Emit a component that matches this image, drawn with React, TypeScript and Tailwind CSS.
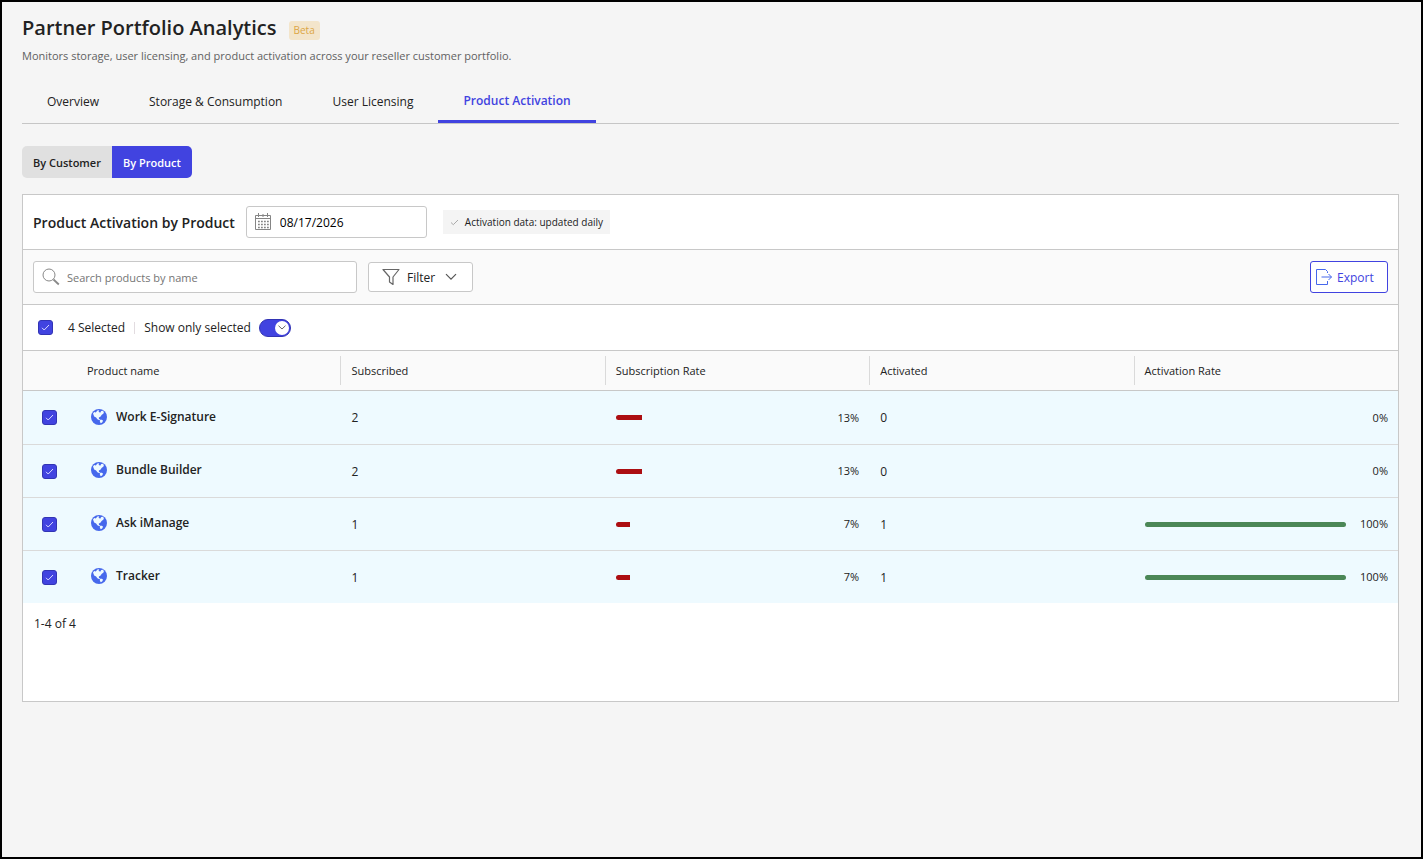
import { useState, type ReactNode } from 'react'
import { clsx } from 'clsx'

type Product = {
  name: string
  subscribed: number
  subscriptionRate: number
  activated: number
  activationRate: number
}

const TABS = ['Overview', 'Storage & Consumption', 'User Licensing', 'Product Activation']
const VIEWS = ['By Customer', 'By Product']
const COLUMNS = ['Product name', 'Subscribed', 'Subscription Rate', 'Activated', 'Activation Rate']

const PRODUCTS: Product[] = [
  { name: 'Work E-Signature', subscribed: 2, subscriptionRate: 13, activated: 0, activationRate: 0 },
  { name: 'Bundle Builder', subscribed: 2, subscriptionRate: 13, activated: 0, activationRate: 0 },
  { name: 'Ask iManage', subscribed: 1, subscriptionRate: 7, activated: 1, activationRate: 100 },
  { name: 'Tracker', subscribed: 1, subscriptionRate: 7, activated: 1, activationRate: 100 },
]

function GlobeIcon() {
  return (
    <svg width="16" height="16" viewBox="0 0 16 16" className="shrink-0" aria-hidden="true">
      <circle cx="8" cy="8" r="8" fill="#4668ec" />
      <path
        d="M2 4.6 3.2 3l1.6.4L6.4 1.4l1.8-.2-.6 1.6 1.6 1 1-1.8 1.6-.3 1.1 1.2-.4 1.7-1.9 1.3-1.2 1.8-1.6.8.2 1.4 1.3.7-.8.6-2.1-1-1.3-1.8L3.2 7.5Z"
        fill="#eefaff"
      />
      <path d="m9.2 10.7 1.7.1 1.2 1-1 1.7-1.4.8-.9-1.8Z" fill="#eefaff" />
    </svg>
  )
}

function CalendarIcon() {
  return (
    <svg width="18" height="18" viewBox="0 0 18 18" fill="none" stroke="#858585" aria-hidden="true">
      <path d="M1.5 2.5h15v14h-15zM1 5.5h16M4.5 0v4M13.5 0v4M9 1v3" />
      <path d="M4 8.5h11M4 11.5h11M4 14.5h11" strokeWidth="1.6" strokeDasharray="1.8 1.2" />
    </svg>
  )
}

function SearchIcon() {
  return (
    <svg width="18" height="18" viewBox="0 0 18 18" fill="none" stroke="#888" aria-hidden="true">
      <circle cx="7" cy="7" r="6" />
      <path d="m11.5 11.5 5.3 5" strokeWidth="1.8" />
    </svg>
  )
}

function FilterIcon() {
  return (
    <svg width="18" height="18" viewBox="0 0 18 18" fill="none" stroke="#666" strokeWidth="1.2" aria-hidden="true">
      <path d="M1 1.5h16L11 9v7.5L7.5 14V9Z" strokeLinejoin="round" />
    </svg>
  )
}

function ExportIcon() {
  return (
    <svg width="16" height="16" viewBox="0 0 16 16" fill="none" stroke="#4668ec" aria-hidden="true">
      <path d="M11.5 4V2.5l-2-2H.5v15h11V12M5.5 8h10M12.5 5l3 3-3 3" />
    </svg>
  )
}

function Chevron({ className }: { className?: string }) {
  return (
    <svg width="12" height="8" viewBox="0 0 12 8" fill="none" stroke="#555" className={className} aria-hidden="true">
      <path d="m1 1.2 5 5 5-5" strokeWidth="1.2" />
    </svg>
  )
}

function Checkbox({ label, checked, onChange }: { label: string; checked: boolean; onChange: () => void }) {
  return (
    <span className="relative block h-[15px] w-[15px]">
      <input
        type="checkbox"
        aria-label={label}
        checked={checked}
        onChange={onChange}
        className="block h-[15px] w-[15px] appearance-none rounded-[3px] border border-[#8a8a8a] bg-white checked:border-[#3234b4] checked:bg-[#4143e0]"
      />
      {checked && (
        <svg viewBox="0 0 15 15" fill="none" stroke="#d9daff" className="pointer-events-none absolute inset-0" aria-hidden="true">
          <path d="m4 7.8 2.2 2.2L11 5" />
        </svg>
      )}
    </span>
  )
}

function RateBar({ value, color }: { value: number; color: string }) {
  return (
    <div className="flex items-center">
      <div className="h-[5px] flex-1 overflow-hidden rounded-full">
        <div className={clsx('h-full', color)} style={{ width: `${value}%` }} />
      </div>
      <span className="w-[42px] pt-px text-right text-[11px]">{value}%</span>
    </div>
  )
}

function Cell({ children, first, className }: { children: ReactNode; first: boolean; className?: string }) {
  return <td className={clsx('h-[53px] p-0', !first && 'border-t border-[#dadada]', className)}>{children}</td>
}

export default function App() {
  const [tab, setTab] = useState('Product Activation')
  const [view, setView] = useState('By Product')
  const [date, setDate] = useState('08/17/2026')
  const [query, setQuery] = useState('')
  const [onlySelected, setOnlySelected] = useState(true)
  const [selected, setSelected] = useState(PRODUCTS.map((p) => p.name))

  const toggle = (name: string) =>
    setSelected((s) => (s.includes(name) ? s.filter((n) => n !== name) : [...s, name]))

  const rows = PRODUCTS.filter(
    (p) => p.name.toLowerCase().includes(query.toLowerCase()) && (!onlySelected || selected.includes(p.name)),
  )

  return (
    <div className="min-h-screen border-2 border-black bg-[#f5f5f5] pr-[22px] pb-8 pl-5 font-['Open_Sans','Noto_Sans',sans-serif] text-xs text-[#222]">
      <header>
        <div className="flex items-end gap-3 pt-[10px]">
          <h1 className="text-xl leading-8 font-semibold">Partner Portfolio Analytics</h1>
          <span className="mb-1 rounded-[3px] bg-[#f3e5cb] px-[5px] text-[10px] leading-[19px] text-[#dca545]">Beta</span>
        </div>
        <p className="mt-1 text-[11px] leading-4 text-[#616161]">
          Monitors storage, user licensing, and product activation across your reseller customer portfolio.
        </p>
      </header>

      <nav role="tablist" className="mt-4 flex border-b border-[#c6c6c6]">
        {TABS.map((t) => (
          <button
            key={t}
            type="button"
            role="tab"
            aria-selected={tab === t}
            onClick={() => setTab(t)}
            className={clsx(
              'h-[43px] px-[25px]',
              tab === t ? 'border-b-[3px] border-[#4143e0] pt-px font-semibold text-[#4143e0]' : 'font-normal',
            )}
          >
            {t}
          </button>
        ))}
      </nav>

      <div className="mt-[22px] inline-flex overflow-hidden rounded-[5px]">
        {VIEWS.map((v) => (
          <button
            key={v}
            type="button"
            aria-pressed={view === v}
            onClick={() => setView(v)}
            className={clsx(
              'h-8 px-[11px] pt-[2px] text-[11px] font-semibold',
              view === v ? 'bg-[#4143e0] text-white' : 'bg-[#e0e0e0]',
            )}
          >
            {v}
          </button>
        ))}
      </div>

      <main className="mt-4 border border-[#c8c8c8] bg-white">
        <div className="flex h-[55px] items-center border-b border-[#c8c8c8] px-[10px]">
          <h2 className="pt-[2px] text-sm font-semibold">Product Activation by Product</h2>
          <label className="ml-[11px] flex h-8 w-[181px] items-center gap-2 rounded-[3px] border border-[#c8c8c8] bg-white px-[7px]">
            <CalendarIcon />
            <input
              type="text"
              aria-label="Date"
              value={date}
              onChange={(e) => setDate(e.target.value)}
              className="min-w-0 flex-1 pt-px text-black outline-none"
            />
          </label>
          <span className="ml-4 flex h-6 items-center gap-[6px] bg-[#f4f4f4] px-[7px] pt-px text-[10px]">
            <svg width="9" height="7" viewBox="0 0 9 7" fill="none" stroke="#aaa" aria-hidden="true">
              <path d="m1 3.5 2.3 2.2L8 1" />
            </svg>
            Activation data: updated daily
          </span>
        </div>

        <div className="flex h-[55px] items-center border-b border-[#c8c8c8] bg-[#fafafa] px-[10px]">
          <label className="flex h-8 w-[324px] items-center gap-[7px] rounded-[3px] border border-[#c8c8c8] bg-white px-2">
            <SearchIcon />
            <input
              type="search"
              aria-label="Search products by name"
              placeholder="Search products by name"
              value={query}
              onChange={(e) => setQuery(e.target.value)}
              className="min-w-0 flex-1 pt-[2px] text-[11px] outline-none placeholder:text-[#757575]"
            />
          </label>
          <button
            type="button"
            className="ml-[11px] flex h-[30px] w-[105px] items-center gap-[7px] rounded-[3px] border border-[#c8c8c8] bg-white pr-[15px] pl-[13px]"
          >
            <FilterIcon />
            <span className="pt-px">Filter</span>
            <Chevron className="ml-auto" />
          </button>
          <button
            type="button"
            className="ml-auto flex h-8 w-[78px] items-center gap-[5px] rounded-[3px] border border-[#4143e0] bg-white px-[5px] text-[#4143e0]"
          >
            <ExportIcon />
            <span className="pt-px">Export</span>
          </button>
        </div>

        <div className="flex h-[46px] items-center border-b border-[#c8c8c8] px-[15px]">
          <Checkbox
            label="Select all products"
            checked={selected.length === PRODUCTS.length}
            onChange={() => setSelected(selected.length === PRODUCTS.length ? [] : PRODUCTS.map((p) => p.name))}
          />
          <span className="ml-[15px]">{selected.length} Selected</span>
          <span className="mx-[9px] h-3 w-px bg-[#e2dce0]" />
          <label htmlFor="only-selected">Show only selected</label>
          <span className="relative ml-2 block h-[18px] w-8">
            <input
              id="only-selected"
              type="checkbox"
              role="switch"
              checked={onlySelected}
              onChange={() => setOnlySelected(!onlySelected)}
              className="block h-[18px] w-8 appearance-none rounded-full border border-[#8a8a8a] bg-[#8a8a8a] checked:border-[#3234b4] checked:bg-[#4143e0]"
            />
            <span
              className={clsx(
                'pointer-events-none absolute top-[2px] flex h-[14px] w-[14px] items-center justify-center rounded-full bg-white',
                onlySelected ? 'right-[2px]' : 'left-[2px]',
              )}
            >
              <svg width="8" height="5" viewBox="0 0 8 5" fill="none" stroke="#666" aria-hidden="true">
                <path d="m.5.7 3.5 3.3L7.5.7" />
              </svg>
            </span>
          </span>
        </div>

        <table className="w-full table-fixed border-separate border-spacing-0 text-left">
          <thead className="bg-[#fafafa]">
            <tr>
              <th aria-label="Select" className="h-10 w-[53px] border-b border-[#c8c8c8] p-0" />
              {COLUMNS.map((c, i) => (
                <th key={c} className="h-10 border-b border-[#c8c8c8] p-0 text-[11px] font-medium">
                  <div
                    className={clsx(
                      'flex h-[29px] items-center pt-px',
                      i > 0 ? 'border-l border-[#dadada] pl-[10px]' : 'pl-[11px]',
                    )}
                  >
                    {c}
                  </div>
                </th>
              ))}
            </tr>
          </thead>
          <tbody>
            {rows.map((p, i) => (
              <tr key={p.name} className={selected.includes(p.name) ? 'bg-[#eefaff]' : 'bg-white'}>
                <Cell first={i === 0} className="pl-[19px]">
                  <Checkbox label={`Select ${p.name}`} checked={selected.includes(p.name)} onChange={() => toggle(p.name)} />
                </Cell>
                <Cell first={i === 0} className="pl-[15px]">
                  <div className="flex items-center gap-[9px] pb-[2px] font-semibold">
                    <GlobeIcon />
                    {p.name}
                  </div>
                </Cell>
                <Cell first={i === 0} className="pt-px pl-[11px]">
                  {p.subscribed}
                </Cell>
                <Cell first={i === 0} className="pr-[10px] pl-[11px]">
                  <RateBar value={p.subscriptionRate} color="bg-[#ac0e12]" />
                </Cell>
                <Cell first={i === 0} className="pt-px pl-[11px]">
                  {p.activated}
                </Cell>
                <Cell first={i === 0} className="pr-[10px] pl-[11px]">
                  <RateBar value={p.activationRate} color="bg-[#4b8757]" />
                </Cell>
              </tr>
            ))}
          </tbody>
        </table>

        <footer className="min-h-[98px] px-[11px] pt-[13px] leading-4">
          {rows.length > 0 ? `1-${rows.length}` : '0'} of {rows.length}
        </footer>
      </main>
    </div>
  )
}
